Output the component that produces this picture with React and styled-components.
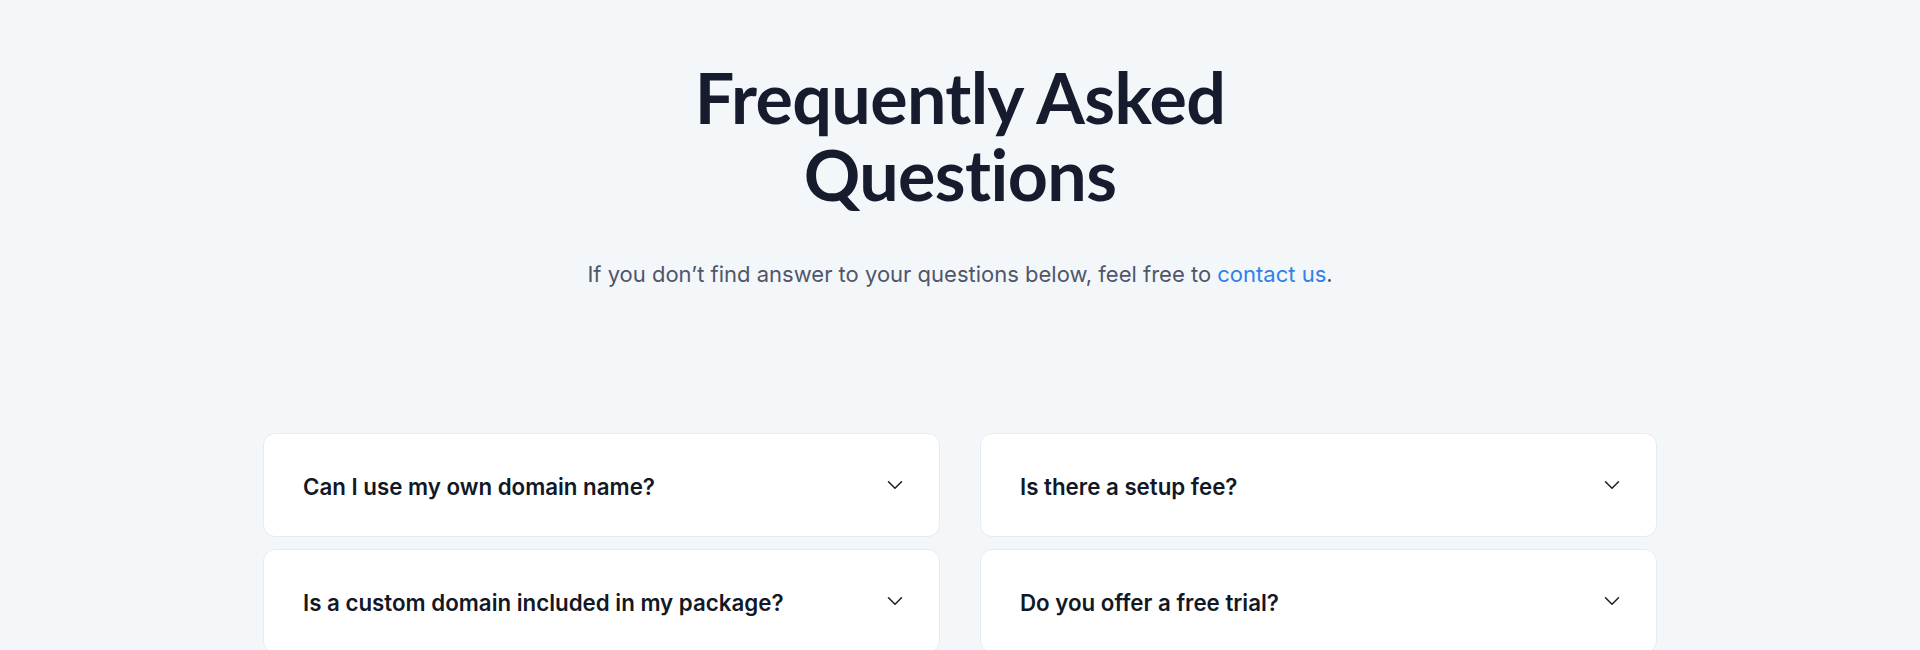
import React from 'react';
import styled, { createGlobalStyle } from 'styled-components';

const GlobalStyle = createGlobalStyle`
    html, body {
        margin: 0;
        padding: 0;
        background: #f4f7fa;
    }
    body {
        font-family: Inter, "Liberation Sans", sans-serif;
        -webkit-font-smoothing: antialiased;
    }
`;

const Section = styled.section`
    padding: 59px 0 40px;
    text-align: center;
`;

const Heading = styled.h1`
    font-family: Lato, "Liberation Sans", sans-serif;
    font-size: 70px;
    line-height: 77px;
    font-weight: 700;
    letter-spacing: -0.6px;
    color: #161c2d;
    margin: 0 auto;
    max-width: 560px;
`;

const Lead = styled.p`
    font-size: 22px;
    line-height: 30px;
    color: #50566a;
    margin: 46px 0 0;
`;

const Link = styled.a`
    color: #2f80ed;
    text-decoration: none;
`;

const Grid = styled.div`
    display: grid;
    grid-template-columns: 1fr 1fr;
    gap: 12px 40px;
    width: 1394px;
    margin: 144px auto 0;
`;

const Card = styled.div`
    display: flex;
    align-items: center;
    justify-content: space-between;
    height: 104px;
    box-sizing: border-box;
    padding: 0 36px 0 39px;
    background: #fff;
    border: 1px solid #e7ebf0;
    border-radius: 12px;
    text-align: left;
`;

const Question = styled.span`
    font-size: 22.3px;
    font-weight: 600;
    color: #121826;
    margin-top: 3px;
`;

const Chevron = () => (
    <svg width="16" height="10" viewBox="0 0 16 10" fill="none">
        <path d="M1.5 1.8 8 8.2l6.5-6.4" stroke="#1c2230" strokeWidth="1.6" strokeLinecap="round" strokeLinejoin="round"/>
    </svg>
);

const questions = [
    'Can I use my own domain name?',
    'Is there a setup fee?',
    'Is a custom domain included in my package?',
    'Do you offer a free trial?',
];

export default function App() {
    return (
        <>
            <GlobalStyle/>
            <Section>
                <Heading>Frequently Asked Questions</Heading>
                <Lead>
                    If you don’t find answer to your questions below, feel free to <Link href="#">contact us</Link>.
                </Lead>
                <Grid>
                    {questions.map((q, i) => (
                        <Card key={i}>
                            <Question>{q}</Question>
                            <Chevron/>
                        </Card>
                    ))}
                </Grid>
            </Section>
        </>
    );
}
